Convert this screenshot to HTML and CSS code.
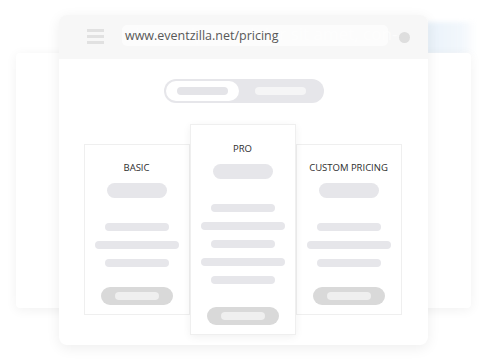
FILE: index.html
```html
<!DOCTYPE html>
<html lang="en">
<head>
  <meta charset="UTF-8">
  <meta name="viewport" content="width=device-width, initial-scale=1.0">
  <title>Pricing preview</title>
  <link rel="stylesheet" href="styles.css">
</head>
<body>
  <div class="scene">
    <!-- layers behind the browser window -->
    <div class="glow"></div>
    <div class="back-card"></div>

    <div class="window">
      <div class="bar">
        <div class="burger"><span></span><span></span><span></span></div>
        <div class="url">
          <span class="ghost">Lorem ipsum dolor sit amet, con-</span>
          <span class="url-text">www.eventzilla.net/pricing</span>
        </div>
        <div class="dot"></div>
      </div>

      <div class="page">
        <div class="toggle">
          <div class="toggle-on"><span></span></div>
          <div class="toggle-off"><span></span></div>
        </div>

        <div class="plans">
          <div class="plan">
            <h3>BASIC</h3>
            <div class="price"></div>
            <div class="lines">
              <span class="short"></span>
              <span class="long"></span>
              <span class="short"></span>
            </div>
            <div class="btn"><span></span></div>
          </div>
          <div class="plan plan-pro">
            <h3>PRO</h3>
            <div class="price"></div>
            <div class="lines">
              <span class="short"></span>
              <span class="long"></span>
              <span class="short"></span>
              <span class="long"></span>
              <span class="short"></span>
            </div>
            <div class="btn"><span></span></div>
          </div>
          <div class="plan">
            <h3>CUSTOM PRICING</h3>
            <div class="price"></div>
            <div class="lines">
              <span class="short"></span>
              <span class="long"></span>
              <span class="short"></span>
            </div>
            <div class="btn"><span></span></div>
          </div>
        </div>
      </div>
    </div>
  </div>
</body>
</html>
```

FILE: styles.css
```css
:root {
  --line: #e6e6ea;
  --btn: #d9d9d9;
  --btn-inner: #efefef;
  --border: #efefef;
}
* { box-sizing: border-box; }
body {
  margin: 0;
  background: #fff;
  font-family: "Open Sans", "Liberation Sans", sans-serif;
}
.scene {
  position: relative;
  width: 487px;
  height: 362px;
  overflow: hidden;
}
.glow {
  position: absolute;
  left: 426px;
  top: 22px;
  width: 50px;
  height: 32px;
  background: linear-gradient(90deg, #e9f2fa, #f2f7fc 70%, rgba(255,255,255,0));
  filter: blur(2px);
}
.back-card {
  position: absolute;
  left: 16px;
  top: 53px;
  width: 455px;
  height: 255px;
  background: #fff;
  border-radius: 4px;
  box-shadow: 0 2px 12px rgba(0,0,0,0.06);
}
.window {
  position: absolute;
  left: 59px;
  top: 15px;
  width: 369px;
  height: 330px;
  background: #fff;
  border-radius: 8px;
  overflow: hidden;
  box-shadow: 0 3px 14px rgba(0,0,0,0.07);
  display: flex;
  flex-direction: column;
}
.bar {
  height: 44px;
  background: #f7f7f7;
  display: flex;
  align-items: center;
  padding: 0 18px 0 28px;
}
.burger {
  width: 17px;
  display: flex;
  flex-direction: column;
  gap: 3px;
  margin-top: -1px;
}
.burger span {
  height: 3px;
  background: #e1e1e1;
}
.url {
  position: relative;
  margin-left: 18px;
  width: 266px;
  height: 21px;
  background: #fcfcfc;
  border-radius: 5px;
  display: flex;
  align-items: center;
  padding-left: 3px;
  margin-top: -3px;
}
.url-text {
  position: relative;
  font-size: 12.5px;
  color: #585858;
}
.ghost {
  position: absolute;
  left: 13px;
  top: -3px;
  font-size: 17px;
  color: rgba(255,255,255,0.55);
  white-space: nowrap;
}
.dot {
  margin-left: auto;
  width: 11px;
  height: 11px;
  border-radius: 50%;
  background: #dedede;
}
.page {
  flex: 1;
  display: flex;
  flex-direction: column;
  align-items: center;
  padding-top: 20px;
}
.toggle {
  width: 160px;
  height: 24px;
  border-radius: 12px;
  background: #e6e6ea;
  display: flex;
  align-items: center;
  padding: 0 2px;
  margin-left: 1px;
}
.toggle-on {
  width: 73px;
  height: 20px;
  border-radius: 10px;
  background: #fff;
  display: flex;
  align-items: center;
  justify-content: center;
}
.toggle-on span,
.toggle-off span {
  display: block;
  width: 51px;
  height: 8px;
  border-radius: 4px;
  background: #e4e4e8;
}
.toggle-off {
  flex: 1;
  display: flex;
  justify-content: center;
}
.toggle-off span { background: #f5f5f6; }
.plans {
  margin-top: 21px;
  display: flex;
  align-items: center;
  margin-left: -2px;
}
.plan {
  width: 106px;
  height: 171px;
  background: #fff;
  border: 1px solid var(--border);
  display: flex;
  flex-direction: column;
  align-items: center;
  padding-top: 16px;
}
.plan-pro {
  height: 211px;
  position: relative;
  z-index: 1;
  box-shadow: 0 2px 8px rgba(0,0,0,0.06);
  padding-top: 17px;
}
.plan h3 {
  margin: 0;
  font-size: 9.5px;
  line-height: 14px;
  font-weight: 400;
  color: #2e2e2e;
}
.price {
  margin-top: 8px;
  width: 60px;
  height: 15px;
  border-radius: 8px;
  background: var(--line);
}
.lines {
  margin-top: 25px;
  display: flex;
  flex-direction: column;
  align-items: center;
  gap: 10px;
}
.lines span {
  display: block;
  height: 8px;
  border-radius: 4px;
  background: var(--line);
}
.lines .short { width: 64px; }
.lines .long { width: 84px; }
.btn {
  margin-top: 20px;
  width: 72px;
  height: 18px;
  border-radius: 9px;
  background: var(--btn);
  display: flex;
  align-items: center;
  justify-content: center;
}
.plan-pro .btn { margin-top: 23px; }
.btn span {
  display: block;
  width: 44px;
  height: 8px;
  border-radius: 4px;
  background: var(--btn-inner);
}
```
